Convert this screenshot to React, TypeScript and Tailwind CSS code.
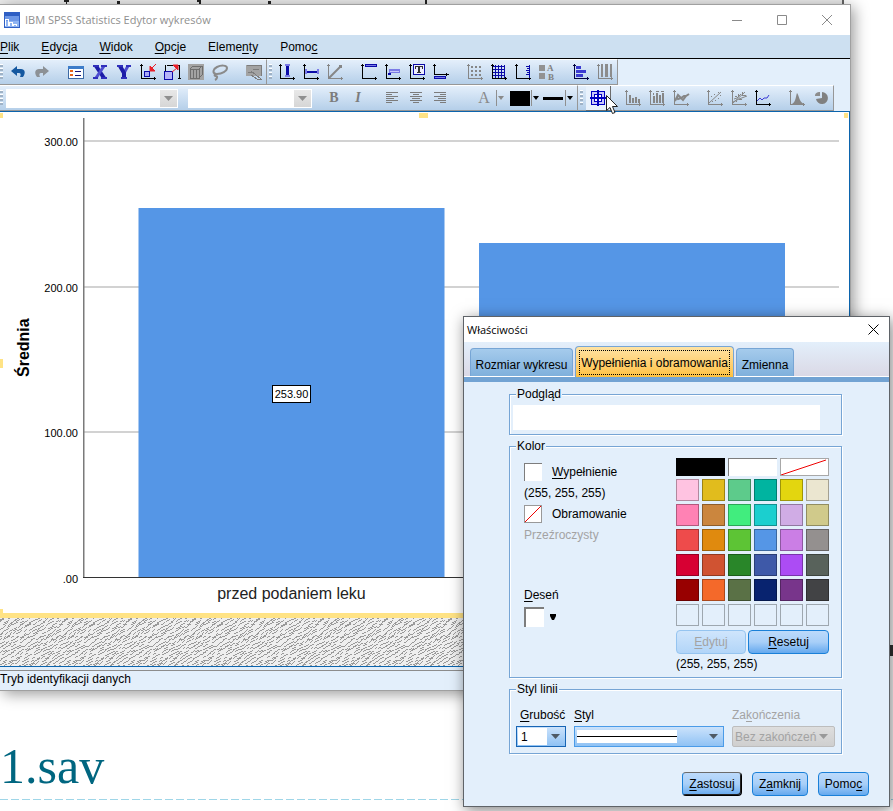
import React from "react";

type Kids = { children?: React.ReactNode };

const K = ({ children }: Kids) => <u className="underline underline-offset-2">{children}</u>;

/* ---------- toolbar icons ---------- */

const Icon = ({ children }: Kids) => (
  <svg width="18" height="18" viewBox="0 0 18 18" fill="none" shapeRendering="crispEdges" aria-hidden="true">
    {children}
  </svg>
);

const Axes = ({ c = "#000" }: { c?: string }) => (
  <g fill={c}>
    <rect x="2" y="1" width="1" height="15" />
    <rect x="1" y="2" width="3" height="1" />
    <rect x="2" y="15" width="15" height="1" />
    <rect x="15" y="14" width="1" height="3" />
  </g>
);

const G = "#868686";
const N = "#0a0aa8";
const L = "#7b7be6";

const undo = (
  <Icon>
    <path d="M2 8l6-5v3h4c4 0 5 4 2 8h-3c1-2 1-4-1-4H8v3z" fill="#1558a0" shapeRendering="auto" />
  </Icon>
);
const redo = (
  <Icon>
    <path d="M16 8l-6-5v3H6c-4 0-5 4-2 8h3c-1-2-1-4 1-4h2v3z" fill="#8c9196" shapeRendering="auto" />
  </Icon>
);
const props = (
  <Icon>
    <rect x="1.500" y="3.500" width="15" height="12" fill="#fff" stroke="#3d6aa5" />
    <rect x="1" y="3" width="16" height="3" fill="#3d7cc9" />
    <path d="M3 7h3v2H3zM3 11h3v2H3z" fill="#e8641b" />
    <path d="M8 8.500h6M8 12.500h6" stroke="#141478" />
  </Icon>
);
const bigX = (
  <Icon>
    <g shapeRendering="auto">
      <path d="M5 3l8 12" stroke="#1c1ca8" strokeWidth="4" />
      <path d="M13 3L5 15" stroke="#4d4dcf" strokeWidth="3" />
      <path d="M2 2h6v2H2zM10 2h6v2h-6zM2 14h5v2H2zM10 14h6v2h-6z" fill="#2f2fbc" />
    </g>
  </Icon>
);
const bigY = (
  <Icon>
    <g shapeRendering="auto">
      <path d="M13 3l-4 7" stroke="#4d4dcf" strokeWidth="3" />
      <path d="M5 3l4 7v5" stroke="#1c1ca8" strokeWidth="4" />
      <path d="M2 2h6v2H2zM11 2h5v2h-5zM6 14h6v2H6z" fill="#2f2fbc" />
    </g>
  </Icon>
);
const zoomIn = (
  <Icon>
    <Axes />
    <rect x="5.500" y="8.500" width="5" height="5" fill="#a9a9f5" stroke={N} />
    <path d="M17 1l-4 4M11 3v5h5z" stroke="#e8202a" fill="#e8202a" shapeRendering="auto" />
  </Icon>
);
const zoomOut = (
  <Icon>
    <path d="M4 2.500h12.500V16M2.500 8V2M15 15.500h3" stroke="#000" />
    <rect x="1.500" y="8.500" width="8" height="8" fill="#b4b4f8" stroke={N} />
    <path d="M9 9l5-4M15 2v5l-5-5z" stroke="#e8202a" fill="#e8202a" shapeRendering="auto" />
  </Icon>
);
const cube = (
  <Icon>
    <rect x="1" y="1" width="16" height="16" fill="#a3a3a3" />
    <path d="M3 6h9v9H3zM3 6l3-3h9l-3 3M15 3v9l-3 3M6 6v9M9 6v9" stroke="#6e6e6e" />
  </Icon>
);
const lasso = (
  <Icon>
    <path d="M5 11c-4-1-3-5 1-7s10-2 10 1-5 6-10 6c-3 0-3 2-1 2s1 3-1 4" stroke="#8a8a8a" strokeWidth="2" shapeRendering="auto" />
  </Icon>
);
const picture = (
  <Icon>
    <rect x="1" y="2" width="16" height="11" fill="#a3a3a3" />
    <path d="M1.500 2.500h15v10M3 9h4M6 8l10 8h-4l-6-4M8 6h6" stroke="#7c7c7c" />
  </Icon>
);
const xRef = (
  <Icon>
    <Axes />
    <path d="M7 1h5v2H7zM7 12h5v2H7z" fill={L} />
    <rect x="8" y="3" width="3" height="9" fill={N} />
  </Icon>
);
const yRef = (
  <Icon>
    <Axes />
    <path d="M3 6h2v5H3zM15 6h2v5h-2z" fill={L} />
    <rect x="5" y="8" width="10" height="2" fill={N} />
  </Icon>
);
const lineRef = (
  <Icon>
    <Axes c={G} />
    <path d="M3 15L15 3" stroke={G} strokeWidth="2" shapeRendering="auto" />
    <path d="M13 2h3v3h-3z" fill={G} />
  </Icon>
);
const titleIcon = (
  <Icon>
    <Axes />
    <rect x="5.500" y="1.500" width="11" height="2" fill={L} stroke={N} />
  </Icon>
);
const annotation = (
  <Icon>
    <Axes />
    <rect x="5" y="6" width="11" height="4" fill={L} />
    <path d="M6 8h9" stroke="#c9c9fb" />
    <rect x="4" y="10" width="3" height="2" fill={N} />
  </Icon>
);
const textBox = (
  <Icon>
    <Axes />
    <rect x="5.500" y="1.500" width="11" height="10" fill="#eef" stroke={N} />
    <path d="M7 3h8v3h-1V4h-2v5h1v1H9V9h1V4H8v2H7z" fill="#333" />
  </Icon>
);
const footnote = (
  <Icon>
    <path d="M2.500 1v10M1 2.500h3M2 11.500h15M14.500 10v3" stroke="#000" />
    <rect x="2.500" y="13.500" width="11" height="2" fill={L} stroke={N} />
  </Icon>
);
const dotGrid = (
  <Icon>
    <Axes c={G} />
    <path d="M5 3.500h12M5 7.500h12M5 11.500h12" stroke={G} strokeWidth="2" strokeDasharray="2 2" />
  </Icon>
);
const grid = (
  <Icon>
    <Axes />
    <path d="M3 3.500h12M3 6.500h12M3 9.500h12M3 12.500h12M5.500 2v13M8.500 2v13M11.500 2v13M14.500 2v13" stroke={N} />
  </Icon>
);
const rightAxis = (
  <Icon>
    <Axes />
    <path d="M15 2v13M12 3.500h3M13 5.500h2M12 7.500h3M13 9.500h2M12 11.500h3" stroke={N} strokeWidth="1" />
  </Icon>
);
const catAB = (
  <Icon>
    <path d="M1 2h6v6H1zM1 10h6v6H1z" fill="#929292" />
    <text x="9" y="8" fontSize="9" fontWeight="bold" fontFamily="Liberation Serif, serif" fill="#808080">A</text>
    <text x="10" y="17" fontSize="9" fontWeight="bold" fontFamily="Liberation Serif, serif" fill="#808080">B</text>
  </Icon>
);
const hbars = (
  <Icon>
    <Axes c="#000040" />
    <path d="M4 3h5v3H4zM4 7h10v3H4zM4 11h7v3H4z" fill="#3a3ad0" />
  </Icon>
);
const vcols = (
  <Icon>
    <Axes c={G} />
    <path d="M5 1h2v13H5zM9 1h3v13H9zM14 1h2v13h-2z" fill="#8c8c8c" />
  </Icon>
);
const align = (x2: number, x3: number) => (
  <Icon>
    <path
      d={`M3 3.500h12M${x2} 5.500h6M3 7.500h12M${x3} 9.500h8M3 11.500h12M${x2} 13.500h6`}
      stroke="#7c7c7c"
    />
  </Icon>
);
const serif = (t: string, cls: string) => <span className={`font-["Liberation_Serif",serif] ${cls}`}>{t}</span>;
const target = (
  <Icon>
    <path d="M2.500 2.500h13v13h-13z" fill="#c9c9fa" stroke="#0000c0" strokeWidth="1" />
    <path d="M5.500 5.500h7v7h-7z" fill="#fff" stroke="#0000c0" strokeWidth="1" />
    <path d="M9 1v16M1 9h16" stroke="#0000c0" strokeWidth="2" />
  </Icon>
);
const barsA = (
  <Icon>
    <Axes c={G} />
    <path d="M5 6h2v8H5zM8 9h2v5H8zM11 8h2v6h-2zM14 10h2v4h-2z" fill={G} />
  </Icon>
);
const barsB = (
  <Icon>
    <Axes c={G} />
    <path d="M5 7h2v7H5zM8 4h2v10H8zM11 6h2v8h-2zM14 4h2v10h-2zM5 4h1v2H5zM8 2h3v1H8zM13 2h3v1h-3z" fill={G} />
  </Icon>
);
const wave = (
  <Icon>
    <Axes c={G} />
    <path d="M3 12l3-6 3 3 3-2h2l3-2M4 8l2 2 3-1 2 2 3-4" stroke={G} strokeWidth="2" shapeRendering="auto" />
  </Icon>
);
const scatter = (
  <Icon>
    <Axes c={G} />
    <path d="M3 14L15 3" stroke={G} shapeRendering="auto" />
    <path d="M5 7h1v1H5zM8 5h1v1H8zM12 3h1v1h-1zM9 11h1v1H9zM12 9h1v1h-1zM6 12h1v1H6zM14 6h1v1h-1z" fill={G} />
  </Icon>
);
const scatter2 = (
  <Icon>
    <Axes c={G} />
    <path d="M3 14L15 3M3 13l6-3 8-3M4 10l3-1 4-4" stroke={G} strokeWidth="1" shapeRendering="auto" />
    <path d="M5 7h2v1H5zM8 5h1v2H8zM12 3h1v3h-1zM9 10h3v1H9zM6 12h1v1H6zM12 6h4v1h-4z" fill={G} />
  </Icon>
);
const lineChart = (
  <Icon>
    <Axes />
    <path d="M3 12l3-3 2 2 2-2h3l2-3" stroke="#3b3bd6" strokeWidth="1" shapeRendering="auto" />
  </Icon>
);
const hist = (
  <Icon>
    <Axes c={G} />
    <path d="M4 15c4-2 4-9 5-11 2 2 2 9 7 11z" fill={G} shapeRendering="auto" />
  </Icon>
);
const pie = (
  <Icon>
    <path d="M10 9V3a6 6 0 1 1-6 7z" fill="#808080" shapeRendering="auto" />
    <path d="M8 7V3C5 3 3 4 3 7z" fill="#8c8c8c" shapeRendering="auto" />
  </Icon>
);

/* ---------- toolbar parts ---------- */

const Tool = ({ label, children }: Kids & { label: string }) => (
  <button type="button" aria-label={label} className="flex h-6 w-6 shrink-0 items-center justify-center">
    {children}
  </button>
);

const Gap = () => <span className="w-2.5 shrink-0" />;

const Grip = () => (
  <span className="my-1 mr-[3px] w-[3px] shrink-0 self-stretch bg-[repeating-linear-gradient(180deg,#ffffff_0_1px,#9fb2c6_1px_3px,transparent_3px_4px)]" />
);

const Panel = ({ children }: Kids) => (
  <div className="flex h-[26px] shrink-0 items-center border-t border-r border-b border-[#979797] border-t-white bg-linear-to-b from-[#e4effb] to-[#b5cfe9]">
    {children}
  </div>
);

const Caret = ({ c = "#000", w = 7 }: { c?: string; w?: number }) => (
  <svg width={w} height="5" viewBox="0 0 10 6" preserveAspectRatio="none" aria-hidden="true">
    <path d="M0 0h10L5 6z" fill={c} />
  </svg>
);

const Drop = ({ c, label }: { c?: string; label: string }) => (
  <button type="button" aria-label={label} className="flex h-4 w-2 shrink-0 items-center justify-end border-l border-[#8f8f8f]">
    <svg width="6" height="4" viewBox="0 0 6 4" aria-hidden="true">
      <path d="M0 0h6L3 4z" fill={c ?? "#000"} />
    </svg>
  </button>
);

const FontSelect = ({ label, cls }: { label: string; cls: string }) => (
  <div className={`relative flex h-[19px] shrink-0 bg-white ${cls}`}>
    <select aria-label={label} disabled className="h-full w-full appearance-none bg-transparent">
      <option></option>
    </select>
    <span className="pointer-events-none absolute inset-y-px right-px flex w-[17px] items-center justify-center bg-linear-to-b from-[#e8e8e8] to-[#d6d6d6]">
      <Caret c="#8f8f8f" w={9} />
    </span>
  </div>
);

/* ---------- dialog parts ---------- */

const Group = ({ title, cls, children }: Kids & { title: string; cls: string }) => (
  <fieldset className={`border border-[#76a5d5] px-1.5 shadow-[1px_1px_0_#fff,inset_1px_1px_0_#fff] ${cls}`}>
    <legend className="bg-[#e3effb] px-px leading-[14px]">{title}</legend>
    {children}
  </fieldset>
);

const palette = [
  "bg-[#ffc3e1]", "bg-[#e1bc1d]", "bg-[#5dcb8b]", "bg-[#00b4a0]", "bg-[#e3d60f]", "bg-[#ebe6d0]",
  "bg-[#ff82b4]", "bg-[#cb863e]", "bg-[#41ed7e]", "bg-[#1bcfcf]", "bg-[#d0ace5]", "bg-[#d0ca8b]",
  "bg-[#ee4b4b]", "bg-[#e08a0e]", "bg-[#5dc435]", "bg-[#5596e6]", "bg-[#cb7ee5]", "bg-[#94908f]",
  "bg-[#d70033]", "bg-[#d05332]", "bg-[#298629]", "bg-[#3e59a8]", "bg-[#ac4cf4]", "bg-[#58625b]",
  "bg-[#980000]", "bg-[#f4692a]", "bg-[#5a7146]", "bg-[#08236f]", "bg-[#78358b]", "bg-[#424345]",
  "bg-transparent", "bg-transparent", "bg-transparent", "bg-transparent", "bg-transparent", "bg-transparent",
];

const blueBtn =
  "h-6 shrink-0 rounded-[4px] border bg-linear-to-b from-[#bcdafb] via-[#a8cff8] to-[#64a9ee] whitespace-nowrap";

/* ---------- stipple under the chart ---------- */

const TILE = 64;

/* Short rising strokes on a 64x48 torus, so that neighbouring tiles join without a seam. */
function stipple() {
  let s = 11;
  const r = (n: number) => {
    s = (s * 48271) % 2147483647;
    return Math.floor((s / 2147483647) * n);
  };
  const cells = new Set<number>();
  const dot = (x: number, y: number) => cells.add(((y + 48) % 48) * TILE + (x % TILE));
  for (let y = 0; y < 48; y += 3) {
    const start = r(5);
    let x = start;
    while (x < start + TILE - 3) {
      const rise = 1 + r(3);
      const dy = r(2);
      let px = x;
      for (let k = 0; k <= rise; k++) {
        dot(px, y + dy - k);
        px += 1;
        if (r(2)) {
          dot(px, y + dy - k);
          px += 1;
        }
      }
      x = px + r(3);
    }
  }
  return [...cells].map((c) => `M${c % TILE} ${Math.floor(c / TILE)}h1v1h-1z`).join("");
}
const stipplePath = stipple();

const sans = "Liberation Sans, Arial, sans-serif";

function Chart() {
  const ticks: [string, number][] = [["300.00", 29], ["200.00", 175], ["100.00", 320]];
  return (
    <svg viewBox="0 0 849 506" className="block w-full bg-white" fontFamily={sans} role="img" aria-label="Średnia">
      {ticks.map(([t, y]) => (
        <g key={t}>
          <rect x="84" y={y - 1} width="755" height="2" fill="#d2d2d2" />
          <text x="78" y={y + 5} fontSize="11" textAnchor="end">{t}</text>
        </g>
      ))}
      <text x="78" y="471" fontSize="11" textAnchor="end">.00</text>
      <rect x="138.500" y="96" width="306" height="369" fill="#5596e6" />
      <rect x="479" y="131" width="306" height="334" fill="#5596e6" />
      <rect x="83" y="6" width="1.500" height="460" fill="#7a7a7a" />
      <rect x="83" y="465" width="756" height="1" fill="#333" />
      <text x="291.500" y="487" fontSize="16" textAnchor="middle" fill="#222">przed podaniem leku</text>
      <text transform="translate(29 265) rotate(-90)" fontSize="16" fontWeight="bold">Średnia</text>
      <rect x="272.500" y="273.500" width="38" height="17" fill="#fff" stroke="#000" />
      <text x="291.500" y="286" fontSize="11" textAnchor="middle">253.90</text>
      <g fill="#ffe385">
        <rect x="0" y="1" width="3" height="5" />
        <rect x="419" y="1" width="9" height="5" />
        <rect x="844" y="1" width="4" height="5" />
        <rect x="0" y="247" width="3" height="9" />
        <rect x="0" y="497" width="3" height="5" />
        <rect x="0" y="501" width="849" height="5" />
      </g>
    </svg>
  );
}

function ChartWindow() {
  const menu: [string, string, string][] = [
    ["", "P", "lik"], ["", "E", "dycja"], ["", "W", "idok"], ["", "O", "pcje"], ["Eleme", "n", "ty"], ["Pomo", "c", ""],
  ];
  return (
    <section className="absolute top-1 right-[42px] left-0 border border-l-0 border-[#a0a0a0] bg-[#e3effb] shadow-[3px_3px_14px_rgba(0,0,0,0.4)]">
      <header className="flex h-[30px] items-center bg-white pl-1">
        <svg width="16" height="16" viewBox="0 0 16 16" shapeRendering="crispEdges" aria-hidden="true">
          <rect width="16" height="16" fill="#2f5fc4" />
          <rect x="1" y="4" width="14" height="11" fill="#8fb4f2" />
          <path d="M1 4h14v5H1z" fill="#6d97e6" />
          <path d="M1.500 14V7.500h3V14M5.500 14v-3.500h3V14M9.500 14v-1.500h3V14" fill="none" stroke="#fff" />
        </svg>
        <h1 className="ml-[5px] flex-1 font-[Open_Sans,sans-serif] text-[11px] text-[#8f8f8f]">IBM SPSS Statistics Edytor wykresów</h1>
        <div className="flex pr-px text-[#8a8a8a]">
          {["M0 5.5h10", "M.5.5h9v9h-9z", "M0 0l10 10M10 0L0 10"].map((d, i) => (
            <button key={d} type="button" aria-label={["Minimalizuj", "Maksymalizuj", "Zamknij"][i]} className="flex h-[30px] w-[45px] items-center justify-center">
              <svg width="10" height="10" viewBox="0 0 10 10" fill="none" stroke="currentColor"><path d={d} /></svg>
            </button>
          ))}
        </div>
      </header>
      <nav className="flex h-6 items-center gap-[22px] border-b border-black bg-[#cde0f1]">
        {menu.map(([a, b, c]) => (
          <button key={b + c} type="button">{a}<K>{b}</K>{c}</button>
        ))}
      </nav>
      <div className="flex">
        <Panel>
          <Grip />
          <Tool label="Cofnij">{undo}</Tool>
          <Tool label="Ponów">{redo}</Tool>
          <Gap />
          <Tool label="Właściwości">{props}</Tool>
          <Tool label="Oś X">{bigX}</Tool>
          <Tool label="Oś Y">{bigY}</Tool>
          <Tool label="Przeskaluj do danych">{zoomIn}</Tool>
          <Tool label="Przeskaluj wykres">{zoomOut}</Tool>
          <Tool label="Obrót 3D">{cube}</Tool>
          <Tool label="Lasso">{lasso}</Tool>
          <Gap />
          <Tool label="Obraz">{picture}</Tool>
        </Panel>
        <Panel>
          <span className="w-0.5" />
          <Grip />
          <Tool label="Linia X">{xRef}</Tool>
          <Tool label="Linia Y">{yRef}</Tool>
          <Tool label="Linia równania">{lineRef}</Tool>
          <Gap />
          <Tool label="Tytuł">{titleIcon}</Tool>
          <Tool label="Adnotacja">{annotation}</Tool>
          <Tool label="Pole tekstowe">{textBox}</Tool>
          <Tool label="Przypis">{footnote}</Tool>
          <Gap />
          <Tool label="Punkty siatki">{dotGrid}</Tool>
          <Tool label="Siatka">{grid}</Tool>
          <Tool label="Oś pochodna">{rightAxis}</Tool>
          <Tool label="Legenda">{catAB}</Tool>
          <Gap />
          <Tool label="Transpozycja">{hbars}</Tool>
          <Tool label="Kolumny">{vcols}</Tool>
        </Panel>
      </div>
      <div className="flex">
        <Panel>
          <Grip />
          <FontSelect label="Czcionka" cls="w-[172px]" />
          <Gap />
          <FontSelect label="Rozmiar czcionki" cls="w-[124px]" />
          <Gap />
          <Tool label="Pogrubienie">{serif("B", "text-[14px] font-bold text-[#7c7c7c]")}</Tool>
          <Tool label="Kursywa">{serif("I", "text-[14px] font-bold italic text-[#7c7c7c]")}</Tool>
          <Gap />
          <Tool label="Do lewej">{align(3, 3)}</Tool>
          <Tool label="Do środka">{align(6, 5)}</Tool>
          <Tool label="Do prawej">{align(9, 7)}</Tool>
          <span className="w-5" />
          <Tool label="Kolor tekstu">{serif("A", "text-[16px] text-[#8a8a8a]")}</Tool>
          <Drop c="#8a8a8a" label="Wybierz kolor tekstu" />
          <button type="button" aria-label="Kolor wypełnienia" className="mr-px ml-1.5 h-[15px] w-5 shrink-0 bg-black" />
          <Drop label="Wybierz wypełnienie" />
          <button type="button" aria-label="Linia" className="mr-0.5 ml-1 h-[3px] w-5 shrink-0 bg-black" />
          <Drop label="Wybierz linię" />
          <span className="w-1" />
        </Panel>
        <Panel>
          <span className="w-0.5" />
          <Grip />
          <span className="relative flex border-r border-b border-[#6c6c6c] bg-[#e9f2fc]">
            <Tool label="Tryb identyfikacji danych">{target}</Tool>
            <svg width="13" height="20" viewBox="0 0 13 20" className="absolute top-[9px] left-5" aria-hidden="true">
              <path d="M.5.5v15l3.500-3 2.500 6 2.500-1-2.500-6h5z" fill="#fff" stroke="#222" />
            </svg>
          </span>
          <Gap />
          <Tool label="Słupki">{barsA}</Tool>
          <Tool label="Słupki błędów">{barsB}</Tool>
          <Tool label="Interpolacja">{wave}</Tool>
          <Gap />
          <Tool label="Linia dopasowania">{scatter}</Tool>
          <Tool label="Dopasowanie podgrup">{scatter2}</Tool>
          <Tool label="Linia interpolacji">{lineChart}</Tool>
          <Gap />
          <Tool label="Krzywa rozkładu">{hist}</Tool>
          <Tool label="Wysuń wycinek">{pie}</Tool>
        </Panel>
      </div>
      <div className="border-t border-r border-b border-[#0b64ad]">
        <Chart />
        <svg className="block h-12 w-full bg-[#efefef]" shapeRendering="crispEdges" aria-hidden="true">
          <defs>
            <pattern id="stipple" width="64" height="48" patternUnits="userSpaceOnUse">
              <path d={stipplePath} fill="#9a9a9a" />
            </pattern>
          </defs>
          <rect width="100%" height="100%" fill="url(#stipple)" />
        </svg>
      </div>
      <footer className="mt-[3px] border-t border-[#8c8c8c] pb-0.5 leading-[17px]">Tryb identyfikacji danych</footer>
    </section>
  );
}

function PropertiesDialog() {
  const tab = "rounded-t-[4px] border border-b-0 border-[#76a5d5] whitespace-nowrap";
  return (
    <section
      role="dialog"
      aria-label="Właściwości"
      className="absolute top-[316px] right-[3px] w-[427px] border border-[#5f6368] bg-[#e3effb] shadow-[2px_3px_14px_rgba(0,0,0,0.5)]"
    >
      <header className="flex h-[25px] items-center bg-white pr-2 pl-[3px]">
        <h2 className="flex-1 font-[Open_Sans,sans-serif] text-[11px]">Właściwości</h2>
        <button type="button" aria-label="Zamknij okno" className="flex h-5 w-[15px] items-center justify-center">
          <svg width="11" height="11" viewBox="0 0 11 11" stroke="#000"><path d="M.5.5l10 10M10.500.5l-10 10" /></svg>
        </button>
      </header>
      <div role="tablist" className="flex items-end gap-0.5 border-b-[5px] border-[#72a3d3] bg-linear-to-b from-[#e3effb] to-[#dad8e5] px-1.5 pt-1 shadow-[inset_0_-1px_0_#fff]">
        <button role="tab" aria-selected="false" type="button" className={`${tab} mb-px h-7 w-[103px] bg-linear-to-b from-[#a5cbec] to-[#7fb0dc] pt-1`}>Rozmiar wykresu</button>
        <button role="tab" aria-selected="true" type="button" className={`${tab} flex h-[31px] w-[159px] border-[#8f9aa0] bg-linear-to-b from-[#ffe3a3] to-[#ffc13c] p-[3px] pb-0.5`}>
          <span className="flex w-full flex-1 items-center justify-center self-stretch border border-dotted border-black">Wypełnienia i obramowania</span>
        </button>
        <button role="tab" aria-selected="false" type="button" className={`${tab} mb-px h-7 w-[58px] bg-linear-to-b from-[#a5cbec] to-[#7fb0dc] pt-1`}>Zmienna</button>
      </div>

      <div className="flex flex-col gap-1 pt-[5px] pr-[47px] pl-[45px]">
        <Group title="Podgląd" cls="pt-1 pb-1">
          <div className="-ml-[3px] mr-[15px] h-[25px] bg-white" />
        </Group>

        <Group title="Kolor" cls="pt-[5px] pb-0.5">
          <div className="flex justify-between pr-1.5 pl-2">
            <div className="flex flex-col items-start pt-[5px]">
              <button type="button" className="flex items-center gap-2.5">
                <span className="h-[18px] w-[18px] border-t border-l border-[#7d7d7d] bg-white" />
                <span><K>W</K>ypełnienie</span>
              </button>
              <span className="leading-6">(255, 255, 255)</span>
              <button type="button" className="flex items-center gap-2.5">
                <span className="border border-[#999] bg-white">
                  <svg width="16" height="16" viewBox="0 0 16 16"><path d="M0 16L16 0" stroke="#e00" /></svg>
                </span>
                <span>Obramowanie</span>
              </button>
              <span className="leading-6 text-[#a3a3a3]">Przeźroczysty</span>
              <label htmlFor="pattern" className="mt-9 leading-6"><K>D</K>eseń</label>
              <button id="pattern" type="button" className="flex items-center gap-1.5">
                <span className="h-5 w-5 border-t-2 border-l-2 border-[#7d7d7d] bg-white" />
                <svg width="6" height="6" viewBox="0 0 6 6"><path d="M0 0h6v2L4 6H2L0 2z" /></svg>
              </button>
            </div>

            <div className="w-[153px]">
              <div className="grid grid-cols-3 gap-[3px]">
                <button type="button" aria-label="Czarny" className="h-[18px] bg-black" />
                <button type="button" aria-label="Biały" className="h-[18px] border-t border-l border-[#7d7d7d] bg-white" />
                <button type="button" aria-label="Przeźroczysty" className="h-[18px] border border-[#a8a8a8] bg-white">
                  <svg width="47" height="16" viewBox="0 0 47 16"><path d="M0 16L45 1" stroke="#e00" /></svg>
                </button>
              </div>
              <div className="mt-[3px] grid grid-cols-6 gap-[3px]">
                {palette.map((c, i) => (
                  <button key={i} type="button" aria-label={`Kolor ${i + 1}`} className={`h-[22px] border border-black/30 ${c}`} />
                ))}
              </div>
              <div className="mt-1 flex gap-0.5">
                <button type="button" disabled className="h-6 w-[70px] rounded-[4px] border border-[#95c4f0] bg-linear-to-b from-[#cfe5fc] to-[#b2d5f8] text-[#a3a3a3]"><K>E</K>dytuj</button>
                <button type="button" className={`${blueBtn} flex-1 border-[#1a80d8]`}><K>R</K>esetuj</button>
              </div>
              <div className="leading-[21px]">(255, 255, 255)</div>
            </div>
          </div>
        </Group>

        <Group title="Styl linii" cls="pt-2.5 pb-1.5">
          <div className="flex gap-2">
            <div className="w-[50px]">
              <label htmlFor="weight" className="block pb-0.5 pl-1 leading-[18px] whitespace-nowrap"><K>G</K>rubość</label>
              <div className="relative h-[21px] border border-[#1765b5] bg-linear-to-b from-[#cbe2fb] to-[#8fc2f4]">
                <span className="absolute inset-y-px right-[18px] left-px bg-white" />
                <select id="weight" className="relative block h-full w-full appearance-none bg-transparent pl-1">
                  <option>1</option>
                </select>
                <span className="pointer-events-none absolute top-[7px] right-[5px] flex"><Caret c="#4e5a66" w={9} /></span>
              </div>
            </div>
            <div className="w-[150px]">
              <label htmlFor="style" className="block pb-0.5 leading-[18px]"><K>S</K>tyl</label>
              <div className="relative h-[21px] border border-[#4a9be8] bg-linear-to-b from-[#cbe2fb] to-[#8fc2f4]">
                <select id="style" className="block h-full w-full appearance-none bg-transparent">
                  <option></option>
                </select>
                <span className="pointer-events-none absolute top-[3px] left-0.5 flex h-[13px] w-[100px] items-center bg-white">
                  <span className="h-px w-full bg-black" />
                </span>
                <span className="pointer-events-none absolute top-[7px] right-[5px] flex"><Caret c="#4e5a66" w={9} /></span>
              </div>
            </div>
            <div className="min-w-0 flex-1 text-[#a3a3a3]">
              <label htmlFor="ends" className="block pb-0.5 leading-[18px]">Za<K>k</K>ończenia</label>
              <div className="relative h-[21px] rounded-[2px] border border-[#bdbdbd] bg-linear-to-b from-[#dedede] to-[#cfcfcf]">
                <select id="ends" disabled className="block h-full w-full appearance-none bg-transparent pl-0.5 text-[#a3a3a3] opacity-100">
                  <option>Bez zakończeń</option>
                </select>
                <span className="pointer-events-none absolute top-[7px] right-[6px] flex"><Caret c="#999" w={9} /></span>
              </div>
            </div>
          </div>
        </Group>
      </div>

      <footer className="flex justify-end gap-2.5 pt-[18px] pr-5 pb-2.5">
        <button type="button" className={`${blueBtn} w-[60px] border-[#1a80d8] border-t-[#6b6b6b] border-r-black border-b-black shadow-[inset_-1px_-1px_0_#222]`}><K>Z</K>astosuj</button>
        <button type="button" className={`${blueBtn} w-[56px] border-[#1a80d8]`}>Z<K>a</K>mknij</button>
        <button type="button" className={`${blueBtn} w-[51px] border-[#1a80d8]`}>Pomo<K>c</K></button>
      </footer>
    </section>
  );
}

export default function App() {
  return (
    <main className="relative h-screen min-h-[811px] overflow-hidden bg-white font-[Liberation_Sans,Arial,sans-serif] text-[12px] leading-[14px] text-black">
      <div className="mr-[49px] h-1 border-r-2 border-[#666] bg-[#ebebeb]">
        <svg width="430" height="4" viewBox="0 0 430 4" shapeRendering="crispEdges" aria-hidden="true">
          <path d="M64 0h5v2h-2v2h-1V2h-2zM117 1h3v3h-3zM197 0h4v4h-2V2h-2zM268 1h3v3h-3zM425 0h2v4h-2z" fill="#222" />
        </svg>
      </div>
      <h2 className="pt-[733px] font-[Liberation_Serif,serif] text-[50px] leading-[58px] text-[#006680]">1.sav</h2>
      <div className="mt-1 h-px bg-[repeating-linear-gradient(90deg,#9fd6e8_0_8px,transparent_8px_11px)]" />
      <ChartWindow />
      <div className="absolute top-[645px] right-0 h-[11px] w-1 bg-[#333]" />
      <PropertiesDialog />
    </main>
  );
}
